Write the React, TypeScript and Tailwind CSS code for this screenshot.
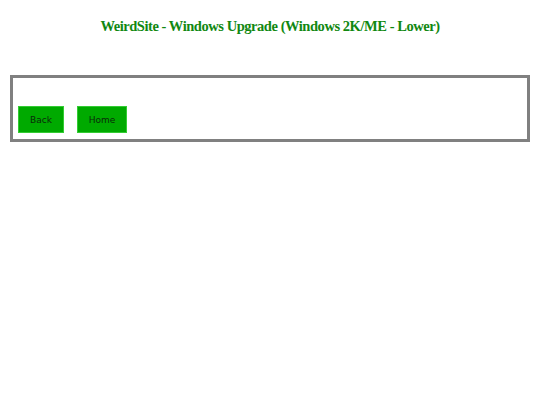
export default function App() {
  return (
    <div className="w-[540px] h-[405px] bg-white" style={{ fontFamily: '"DejaVu Sans", sans-serif' }}>
      <h1 className="pt-[18px] text-center text-[14.5px] leading-[17px] tracking-[-0.45px] font-bold text-[#118811]" style={{ fontFamily: '"Liberation Serif", serif' }}>
        WeirdSite - Windows Upgrade (Windows 2K/ME - Lower)
      </h1>
      <div className="mx-[10px] mt-[40px] border-[3px] border-[#808080] pt-[28px] pb-[6px] px-[5px]">
        <div className="flex gap-[13px]">
          <button className="h-[27px] w-[46px] pt-[3px] bg-[#00aa00] border border-[#33cc33] text-[9px] text-[#0a2a0a]">Back</button>
          <button className="h-[27px] w-[50px] pt-[3px] bg-[#00aa00] border border-[#33cc33] text-[9px] text-[#0a2a0a]">Home</button>
        </div>
      </div>
    </div>
  );
}
